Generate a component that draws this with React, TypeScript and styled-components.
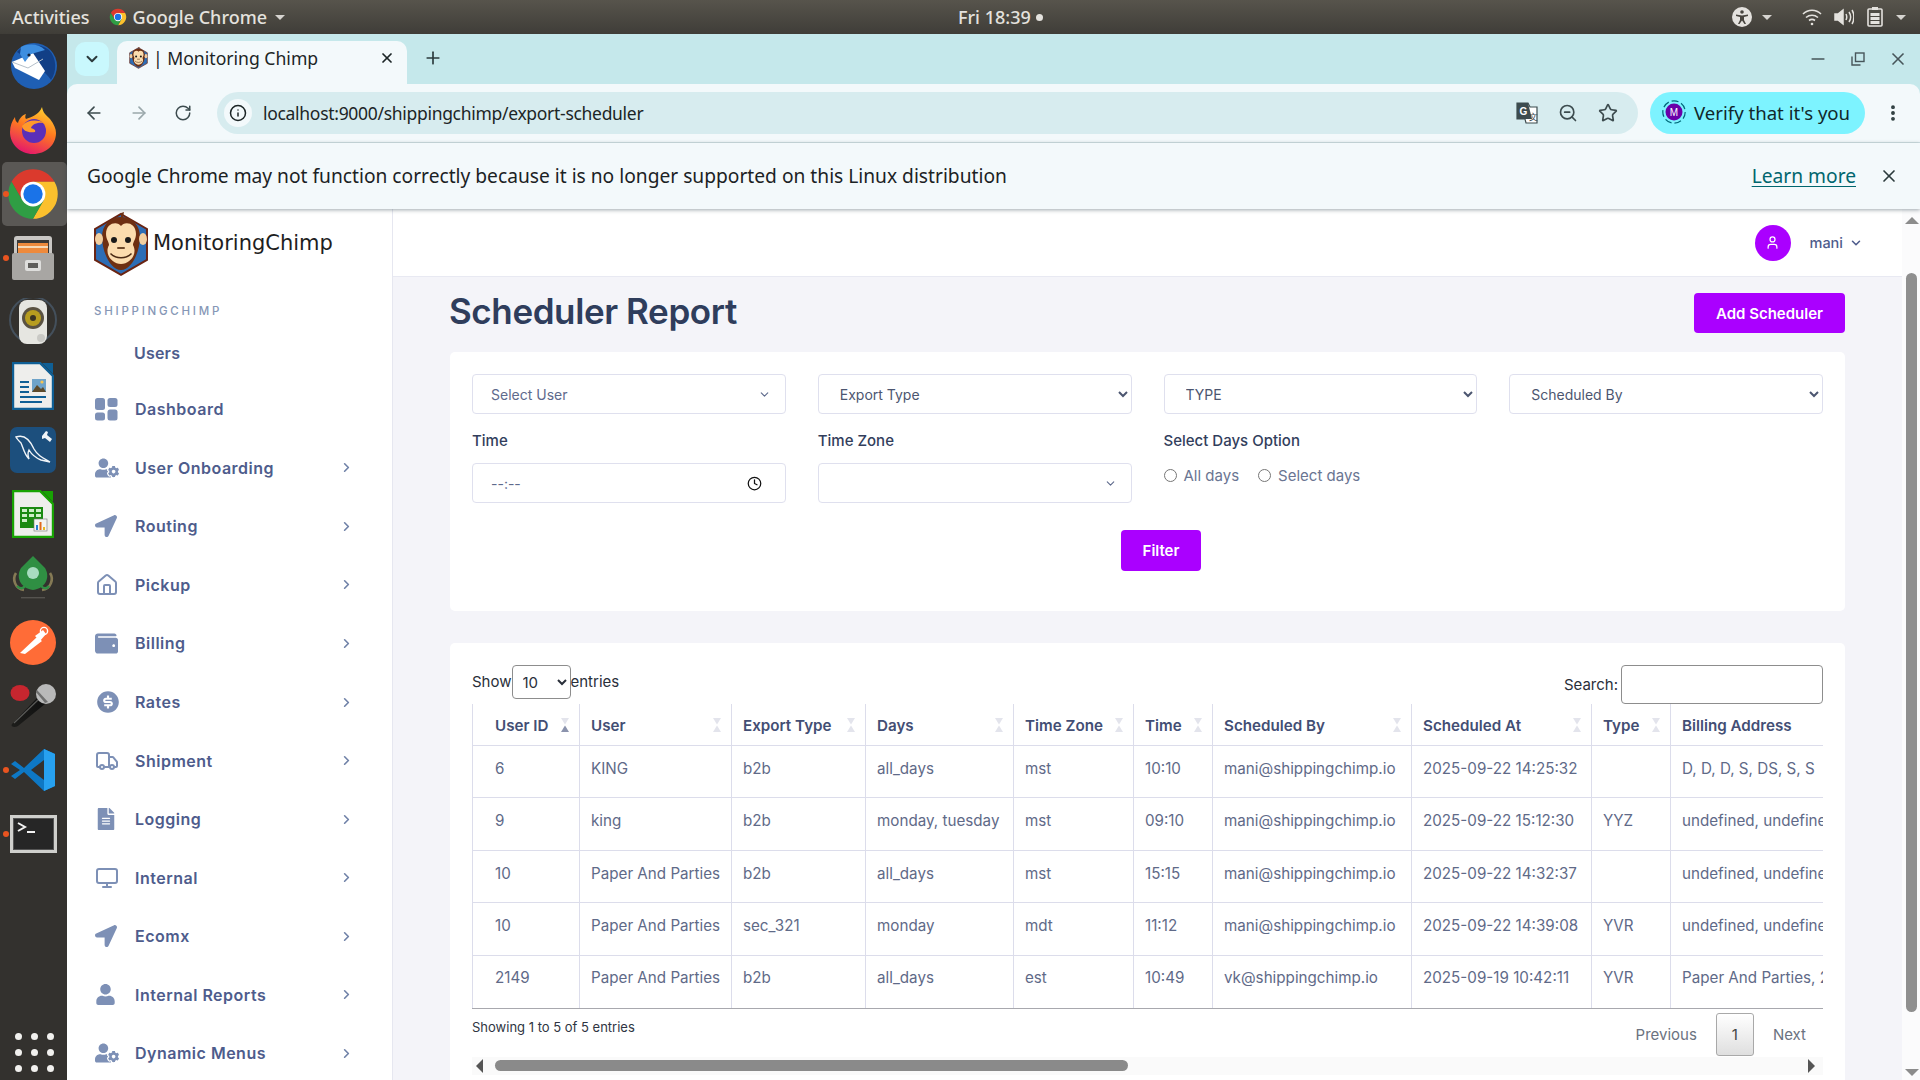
import React from 'react';
import styled, { createGlobalStyle } from 'styled-components';
import { ChevronDown, ChevronRight, Clock, Home, Monitor, Truck, User, X, Plus, ArrowLeft, ArrowRight, RotateCw, Info, ZoomOut, Star, EllipsisVertical, Minus } from 'lucide-react';
import { FaUserCog, FaLocationArrow, FaWallet, FaFileAlt, FaUser } from 'react-icons/fa';
import { RiMoneyDollarCircleFill } from 'react-icons/ri';

const ui = '"Inter", "Liberation Sans", sans-serif';
const chromeFont = '"Noto Sans", "Open Sans", sans-serif';
const purple = '#aa00ff';

const GlobalStyle = createGlobalStyle`
  html, body { margin: 0; padding: 0; height: 100%; overflow: hidden; }
  * { box-sizing: border-box; }
`;

const Screen = styled.div`
  width: 1920px;
  height: 1080px;
  overflow: hidden;
  display: flex;
  flex-direction: column;
  font-family: ${ui};
`;

// ---- ubuntu top bar
const TopBar = styled.div`
  height: 34px;
  flex: none;
  display: flex;
  align-items: center;
  background: linear-gradient(180deg, #57544c 0%, #3f3d38 100%);
  color: #e4e2de;
  font-family: ${chromeFont};
  font-size: 18px;
  font-weight: 500;
`;
const TopLeft = styled.div`
  width: 958px;
  flex: none;
  display: flex;
  align-items: center;
  padding-left: 12px;
`;
const AppName = styled.div`
  display: flex;
  align-items: center;
  gap: 6px;
  margin-left: 19px;
`;
const Caret = styled.span<{ $ml?: number }>`
  width: 0;
  height: 0;
  margin-left: ${p => p.$ml ?? 0}px;
  border-left: 5px solid transparent;
  border-right: 5px solid transparent;
  border-top: 5px solid #d6d4d0;
`;
const ClockText = styled.div`
  display: flex;
  align-items: center;
  gap: 5px;
`;
const ClockDot = styled.span`
  width: 7px;
  height: 7px;
  border-radius: 50%;
  background: #e4e2de;
`;
const TopRight = styled.div`
  margin-left: auto;
  padding-right: 14px;
  display: flex;
  align-items: center;
`;
const Spacer = styled.span<{ $w: number }>`
  width: ${p => p.$w}px;
`;

// ---- dock
const Body = styled.div`
  flex: 1;
  display: flex;
  min-height: 0;
`;
const Dock = styled.div`
  width: 67px;
  flex: none;
  background: #33312e;
  display: flex;
  flex-direction: column;
  align-items: flex-start;
`;
const DockItem = styled.div<{ $active?: boolean; $running?: boolean }>`
  width: 65px;
  height: 64px;
  margin-left: 2px;
  padding-right: 3px;
  flex: none;
  display: flex;
  align-items: center;
  justify-content: center;
  border-radius: 5px;
  position: relative;
  background: ${p => (p.$active ? '#5a5855' : 'transparent')};
  &::before {
    content: '';
    display: ${p => (p.$running ? 'block' : 'none')};
    position: absolute;
    left: 1px;
    top: 29px;
    width: 6px;
    height: 6px;
    border-radius: 50%;
    background: #e95420;
  }
`;
const DockGrid = styled.div`
  margin: auto 0 8px 15px;
  display: grid;
  grid-template-columns: repeat(3, 7px);
  gap: 9px;
  span {
    width: 7px;
    height: 7px;
    border-radius: 50%;
    background: #f1f0ee;
  }
`;

// ---- browser chrome
const Browser = styled.div`
  flex: 1;
  min-width: 0;
  display: flex;
  flex-direction: column;
  background: #c5e8eb;
`;
const TabStrip = styled.div`
  height: 50px;
  flex: none;
  display: flex;
  align-items: flex-end;
  padding-left: 8px;
  color: #2b3a3c;
`;
const TabListButton = styled.div`
  width: 34px;
  height: 34px;
  margin-bottom: 8px;
  border-radius: 10px;
  background: #c9f8fd;
  display: flex;
  align-items: center;
  justify-content: center;
`;
const Tab = styled.div`
  width: 290px;
  height: 43px;
  margin-left: 8px;
  padding: 0 12px 9px 12px;
  display: flex;
  align-items: center;
  background: #f3f9fb;
  border-radius: 10px 10px 0 0;
  font-family: ${chromeFont};
  font-size: 17.6px;
  color: #1c2526;
  span {
    margin-left: 5px;
    flex: 1;
    white-space: nowrap;
  }
`;
const NewTab = styled.div`
  margin: 0 0 12px 16px;
  height: 28px;
  display: flex;
  align-items: center;
`;
const WindowButtons = styled.div`
  margin-left: auto;
  padding: 0 12px 0 0;
  height: 50px;
  display: flex;
  align-items: center;
  gap: 23px;
  color: #47565a;
`;
const Toolbar = styled.div`
  height: 59px;
  flex: none;
  display: flex;
  align-items: center;
  padding: 0 16px 0 17px;
  background: #f3f9fb;
  border-radius: 10px 10px 0 0;
  border-bottom: 1px solid #d3e2e5;
  color: #47565a;
`;
const NavButton = styled.div<{ $dim?: boolean }>`
  width: 45px;
  flex: none;
  display: flex;
  justify-content: flex-start;
  padding-left: 0;
  color: ${p => (p.$dim ? '#9aa8ab' : '#3d4c4f')};
`;
const Omnibox = styled.div`
  width: 1421px;
  height: 42px;
  margin-left: -2px;
  flex: none;
  display: flex;
  align-items: center;
  padding-left: 7px;
  border-radius: 21px;
  background: #d7ecef;
  font-family: ${chromeFont};
  font-size: 17.5px;
  letter-spacing: -0.3px;
  color: #1c2526;
`;
const InfoChip = styled.div`
  width: 28px;
  height: 28px;
  border-radius: 50%;
  background: #f3f9fb;
  display: flex;
  align-items: center;
  justify-content: center;
  margin-right: 11px;
`;
const OmniActions = styled.div`
  margin-left: auto;
  display: flex;
  align-items: center;
  gap: 20px;
  padding-right: 20px;
  color: #3d4c4f;
`;
const VerifyPill = styled.div`
  width: 215px;
  height: 42px;
  margin-left: 12px;
  flex: none;
  display: flex;
  align-items: center;
  gap: 8px;
  padding: 0 0 2px 12px;
  border-radius: 21px;
  background: #7df3ff;
  font-family: ${chromeFont};
  font-size: 18.6px;
  color: #10282c;
  white-space: nowrap;
`;
const MenuDots = styled.div`
  margin-left: 18px;
  display: flex;
  color: #2b3a3c;
`;
const InfoBar = styled.div`
  height: 66px;
  flex: none;
  display: flex;
  align-items: center;
  padding: 0 21px 1px 20px;
  position: relative;
  z-index: 2;
  background: #f3f9fb;
  box-shadow: 0 1px 4px rgba(40, 60, 70, 0.45);
  font-family: ${chromeFont};
  font-size: 19.2px;
  color: #1b2224;
  white-space: nowrap;
`;
const LearnMore = styled.a`
  margin-left: auto;
  color: #00666e;
  text-decoration: underline;
  text-underline-offset: 3px;
`;
const InfoClose = styled.div`
  margin-left: 23px;
  display: flex;
  color: #2b3a3c;
`;

// ---- page
const Page = styled.div`
  flex: 1;
  min-height: 0;
  display: flex;
  background: #f4f4f9;
`;
const Sidebar = styled.aside`
  width: 326px;
  flex: none;
  background: #fff;
  border-right: 1px solid #e6e7f0;
  padding-top: 3px;
`;
const Brand = styled.div`
  display: flex;
  align-items: center;
  height: 65px;
  padding-left: 26px;
  font-family: "DejaVu Sans", sans-serif;
  font-size: 21px;
  color: #1e1e1e;
  span { margin: 0 0 3px 4px; }
`;
const SectionTitle = styled.div`
  margin: 27px 0 0 27px;
  font-size: 11.5px;
  font-weight: 500;
  letter-spacing: 2.75px;
  color: #8697b6;
`;
const SubItem = styled.div`
  margin: 23px 0 0 67px;
  height: 24px;
  line-height: 24px;
  font-size: 16px;
  font-weight: 600;
  letter-spacing: 0.2px;
  color: #4e5c8c;
`;
const NavList = styled.nav`
  margin-top: 15px;
  display: flex;
  flex-direction: column;
`;
const NavItem = styled.div`
  height: 58.55px;
  display: flex;
  align-items: center;
  padding: 0 38px 0 28px;
  font-size: 16px;
  font-weight: 600;
  letter-spacing: 0.5px;
  color: #4e5c8c;
`;
const NavIcon = styled.span`
  width: 40px;
  flex: none;
  display: flex;
  color: #7d90b6;
`;
const NavChevron = styled.span`
  margin-left: auto;
  display: flex;
  color: #6f81a7;
`;
const Main = styled.main`
  flex: 1;
  min-width: 0;
  display: flex;
  flex-direction: column;
`;
const TopHeader = styled.header`
  height: 68px;
  flex: none;
  display: flex;
  align-items: center;
  justify-content: flex-end;
  padding-right: 39px;
  background: #fff;
  border-bottom: 1px solid #e8e9f2;
  font-size: 14.5px;
  font-weight: 500;
  color: #4e5c8c;
`;
const Avatar = styled.div`
  width: 36px;
  height: 36px;
  margin: 0 19px 0 0;
  border-radius: 50%;
  background: ${purple};
  color: #fff;
  display: flex;
  align-items: center;
  justify-content: center;
`;
const UserName = styled.div`
  display: flex;
  align-items: center;
  gap: 6px;
`;
const Content = styled.div`
  flex: 1;
  min-height: 0;
  padding: 16px 57px 0 57px;
`;
const TitleRow = styled.div`
  height: 40px;
  display: flex;
  align-items: center;
  justify-content: space-between;
  margin-bottom: 19px;
`;
const Title = styled.h1`
  margin: -5px 0 0 -1px;
  font-size: 35px;
  font-weight: 600;
  letter-spacing: -0.4px;
  color: #2f3d5c;
`;
const PrimaryButton = styled.button`
  height: 40px;
  padding: 0 22px;
  border: 0;
  border-radius: 4px;
  background: ${purple};
  color: #fff;
  font-family: ${ui};
  font-size: 15px;
  font-weight: 600;
`;
const Card = styled.section`
  background: #fff;
  border-radius: 5px;
  padding: 22px 22px 0 22px;
`;
const FilterCard = styled(Card)`
  height: 259px;
  margin-bottom: 32px;
`;
const FilterGrid = styled.div`
  display: grid;
  grid-template-columns: repeat(4, 1fr);
  column-gap: 32px;
  row-gap: 16px;
`;
const fieldBase = `
  width: 100%;
  height: 40px;
  border: 1px solid #dfe0ee;
  border-radius: 4px;
  background: #fff;
  font-family: ${ui};
  font-size: 14px;
`;
const NativeSelect = styled.select`
  ${fieldBase}
  padding-left: 17px;
  color: #4c5670;
`;
const FakeField = styled.div<{ $pr?: number }>`
  ${fieldBase}
  display: flex;
  align-items: center;
  justify-content: space-between;
  padding: 0 ${p => p.$pr ?? 14}px 0 18px;
  color: #5e6a8c;
`;
const FieldBlock = styled.div`
  display: flex;
  flex-direction: column;
`;
const FieldLabel = styled.label`
  height: 33px;
  line-height: 22px;
  font-size: 15px;
  font-weight: 500;
  color: #323e5c;
`;
const RadioRow = styled.div`
  display: flex;
  align-items: center;
  height: 24px;
  font-size: 15px;
  color: #6a7592;
  label {
    display: flex;
    align-items: center;
    margin-right: 19px;
  }
  input {
    width: 13px;
    height: 13px;
    margin: 0 7px 0 0;
  }
`;
const FilterAction = styled.div`
  margin-top: 27px;
  display: flex;
  justify-content: center;
  button { margin-left: 27px; padding: 0 22px; height: 41px; }
`;
const TableCard = styled(Card)`
  height: 460px;
  color: #2a2f3a;
`;
const TableTop = styled.div`
  height: 39px;
  display: flex;
  justify-content: space-between;
  font-size: 15px;
`;
const LengthControl = styled.div`
  display: flex;
  align-items: flex-start;
  line-height: 34px;
  select {
    width: 59px;
    height: 34px;
    padding-left: 6px;
    border: 1px solid #8d8d8d;
    border-radius: 4px;
    background: #fff;
    font-family: ${ui};
    font-size: 15px;
    color: #2a2f3a;
  }
`;
const SearchControl = styled.div`
  display: flex;
  align-items: center;
  gap: 3px;
  input {
    width: 202px;
    height: 39px;
    border: 1px solid #8d8d8d;
    border-radius: 4px;
    background: #fff;
  }
`;
const TableClip = styled.div`
  overflow: hidden;
  border-bottom: 1px solid #a8a8ae;
`;
const Table = styled.table`
  table-layout: fixed;
  width: 1649px;
  border-collapse: collapse;
  border-style: hidden hidden hidden solid;
  border-left: 1px solid #dcddeb;
  th, td {
    border: 1px solid #dcddeb;
    padding: 0 10px 0 11px;
    text-align: left;
    white-space: nowrap;
    overflow: hidden;
    font-size: 15.2px;
  }
  th:first-child, td:first-child { padding-left: 22px; }
  th {
    height: 41px;
    padding-top: 2px;
    font-weight: 600;
    color: #434e74;
    border-top: 1px solid #dcddeb;
  }
  td {
    height: 52.6px;
    padding-top: 11px;
    padding-bottom: 16px;
    vertical-align: top;
    line-height: 24px;
    color: #5f6a88;
  }
  tr:last-child td { border-bottom: 0; padding-top: 10px; }
`;
const HeadInner = styled.div`
  display: flex;
  align-items: center;
  justify-content: space-between;
  svg { flex: none; }
`;
const TableFooter = styled.div`
  height: 48px;
  display: flex;
  justify-content: space-between;
  align-items: flex-start;
`;
const InfoText = styled.div`
  margin-top: 10px;
  font-size: 13px;
  color: #2f3542;
`;
const Pagination = styled.div`
  display: flex;
  align-items: center;
  margin-top: 4px;
  padding-right: 17px;
  font-size: 15px;
  color: #6b7280;
`;
const PageButton = styled.div`
  width: 38px;
  height: 43px;
  margin: 0 19px;
  display: flex;
  align-items: center;
  justify-content: center;
  border: 1px solid #a9a9a9;
  border-radius: 3px;
  background: linear-gradient(180deg, #fff 0%, #dfdfdf 100%);
  color: #444;
`;
const HScroll = styled.div`
  height: 18px;
  display: flex;
  align-items: center;
  background: #fafafa;
  padding: 0 8px 0 4px;
  span.thumb {
    width: 633px;
    height: 11px;
    margin-left: 12px;
    border-radius: 6px;
    background: #8a8a8a;
  }
`;
const ArrowH = styled.span<{ $right?: boolean }>`
  width: 0;
  height: 0;
  margin-left: ${p => (p.$right ? 'auto' : '0')};
  border-top: 7px solid transparent;
  border-bottom: 7px solid transparent;
  border-left: ${p => (p.$right ? '7px solid #555' : '0')};
  border-right: ${p => (p.$right ? '0' : '7px solid #555')};
`;
const VScroll = styled.div`
  width: 18px;
  flex: none;
  background: #fbfbfc;
  display: flex;
  flex-direction: column;
  align-items: center;
  padding: 8px 0 4px 1px;
`;
const ArrowV = styled.span<{ $down?: boolean }>`
  width: 0;
  height: 0;
  flex: none;
  border-left: 7px solid transparent;
  border-right: 7px solid transparent;
  border-bottom: ${p => (p.$down ? '0' : '7px solid #8c8c8c')};
  border-top: ${p => (p.$down ? '7px solid #8c8c8c' : '0')};
`;
const VThumb = styled.span`
  width: 11px;
  height: 739px;
  margin: 49px 0 auto;
  border-radius: 6px;
  background: #8f8f8f;
`;

// ---- drawings
const ChromeLogo = ({ size }: { size: number }) => (
  <svg width={size} height={size} viewBox="0 0 48 48">
    <path d="M43.05 13A22 22 0 0 0 4.95 13L14.47 29.5 24 13Z" fill="#db3a2d" />
    <path d="M43.05 13A22 22 0 0 1 24 46L33.5 29.5 24 13Z" fill="#fbc02d" />
    <path d="M4.95 13A22 22 0 0 0 24 46L33.5 29.5 14.47 29.5Z" fill="#2f9e44" />
    <circle cx="24" cy="24" r="11" fill="#fff" />
    <circle cx="24" cy="24" r="8.6" fill="#1a73e8" />
  </svg>
);

const Chimp = ({ size }: { size: number }) => (
  <svg width={size} height={size * 1.16} viewBox="0 0 56 65">
    <path d="M28 2 54 17V48L28 63 2 48V17Z" fill="#2d6db5" stroke="#6a2412" strokeWidth="2" />
    <path d="M28 1l3-1-1 5c10 1 17 9 17 20 0 14-8 33-19 33S9 39 9 25C9 13 17 5 28 5Z" fill="#6e2f12" />
    <ellipse cx="6" cy="27" rx="4" ry="6" fill="#f2cfa0" />
    <ellipse cx="50" cy="27" rx="4" ry="6" fill="#f2cfa0" />
    <path d="M28 14c3-5 15-4 15 8 0 5-3 8-3 11 5 9-3 19-12 19S11 42 16 33c0-3-3-6-3-11 0-12 12-13 15-8Z" fill="#fbdcae" />
    <circle cx="21" cy="28" r="3" fill="#1a1a1a" />
    <circle cx="35" cy="28" r="3" fill="#1a1a1a" />
    <path d="M25 36h6" stroke="#6e4a2c" strokeWidth="2" strokeLinecap="round" />
    <path d="M18 42c5 5 15 5 20 0" stroke="#4a2a14" strokeWidth="1.6" fill="none" strokeLinecap="round" />
  </svg>
);

const Thunderbird = () => (
  <svg width="48" height="48" viewBox="0 0 48 48">
    <circle cx="25" cy="24" r="23" fill="#1f5fb4" />
    <path d="M8 10c6-8 22-10 32-2 8 8 8 22 2 30-5-8-16-16-34-28Z" fill="#123f86" />
    <path d="M3 20 24 11l12 18-6 9L6 26Z" fill="#fff" />
    <path d="M3 20l16 6 15-9" stroke="#b5bfc9" strokeWidth="1" fill="none" />
    <path d="M12 5c8-4 18-3 24 3l-14 4-6 8-5-8Z" fill="#3d8ee0" />
    <circle cx="20" cy="13" r="1.6" fill="#10233f" />
  </svg>
);

const Firefox = () => (
  <svg width="48" height="48" viewBox="0 0 48 48">
    <defs>
      <linearGradient id="ff" x1="0.7" y1="0" x2="0.3" y2="1">
        <stop offset="0" stopColor="#ffcf30" />
        <stop offset="0.45" stopColor="#ff7a1f" />
        <stop offset="1" stopColor="#e3136f" />
      </linearGradient>
    </defs>
    <path d="M33 1c1 6 4 8 8 12 4 5 6 10 6 14 0 12-10 21-23 21S1 38 1 26c0-6 2-11 5-15 0 3 1 5 3 6 1-4 4-8 8-9-1 2-1 4 0 5 5-2 13-4 16-12Z" fill="url(#ff)" />
    <circle cx="25" cy="25" r="12" fill="#5b2fb8" />
    <path d="M13 20c5-6 15-7 22-3-8-1-12 2-13 5 3 1 5 2 4 4-7 1-12-1-13-6Z" fill="#ff9a2b" />
  </svg>
);

const FilesIcon = () => (
  <svg width="44" height="46" viewBox="0 0 44 46">
    <rect x="3" y="1" width="38" height="44" rx="3" fill="#c9c7c4" />
    <rect x="6" y="5" width="32" height="14" fill="#3b3936" />
    <rect x="7" y="8" width="30" height="10" fill="#ee8a3c" />
    <rect x="7" y="11" width="30" height="2" fill="#f8d9b5" />
    <rect x="1" y="18" width="42" height="27" rx="2" fill="#a8a6a3" />
    <rect x="14" y="25" width="16" height="11" rx="2" fill="#dededc" />
    <rect x="17" y="28" width="10" height="5" fill="#5f5e5b" />
  </svg>
);

const Rhythmbox = () => (
  <svg width="48" height="48" viewBox="0 0 48 48">
    <circle cx="24" cy="22" r="23" fill="none" stroke="#44505c" strokeWidth="2" />
    <rect x="10" y="2" width="28" height="44" rx="8" fill="#e6e6e1" />
    <circle cx="24" cy="20" r="11" fill="#5a5242" />
    <circle cx="24" cy="20" r="8" fill="#b79d1f" />
    <circle cx="24" cy="20" r="3" fill="#3b3523" />
    <circle cx="32" cy="40" r="4" fill="#c9c9c5" />
  </svg>
);

const DocIcon = ({ accent, children }: { accent: string; children: React.ReactNode }) => (
  <svg width="42" height="48" viewBox="0 0 42 48">
    <path d="M1 1H28L41 14V47H1Z" fill="#eeeeec" stroke={accent} strokeWidth="2.4" />
    <path d="M30 1H41V12Z" fill={accent} />
    {children}
  </svg>
);

const WriterIcon = () => (
  <DocIcon accent="#0f5f95">
    <rect x="8" y="19" width="9" height="2" fill="#0f5f95" />
    <rect x="8" y="24" width="9" height="2" fill="#0f5f95" />
    <rect x="8" y="29" width="9" height="2" fill="#0f5f95" />
    <rect x="8" y="34" width="26" height="2" fill="#0f5f95" />
    <rect x="8" y="39" width="22" height="2" fill="#0f5f95" />
    <rect x="20" y="17" width="14" height="13" fill="#6ea3c9" />
    <path d="M20 30l5-7 4 4 2-2 3 5Z" fill="#5d4a2a" />
    <circle cx="30" cy="20" r="1.6" fill="#f5c451" />
  </DocIcon>
);

const CalcIcon = () => (
  <DocIcon accent="#18a303">
    <rect x="8" y="17" width="23" height="21" fill="#1b8a12" />
    <g fill="#cdeec7">
      <rect x="10" y="19" width="5" height="3" />
      <rect x="17" y="19" width="5" height="3" />
      <rect x="24" y="19" width="5" height="3" />
      <rect x="10" y="24" width="5" height="3" />
      <rect x="17" y="24" width="5" height="3" />
      <rect x="24" y="24" width="5" height="3" />
      <rect x="10" y="29" width="5" height="3" />
    </g>
    <rect x="22" y="29" width="13" height="12" fill="#f4f4f2" stroke="#777" strokeWidth="0.6" />
    <rect x="24" y="35" width="2" height="5" fill="#2a7fd1" />
    <rect x="27.5" y="32" width="2" height="8" fill="#e06a1c" />
    <rect x="31" y="37" width="2" height="3" fill="#e8b822" />
  </DocIcon>
);

const WorkbenchIcon = () => (
  <svg width="46" height="46" viewBox="0 0 46 46">
    <rect width="46" height="46" rx="7" fill="#1c4f7d" />
    <path d="M6 10c8-3 14 3 18 12 4 7 9 9 16 13l-9-2c-5-2-9-5-12-10-2 4 0 9 0 9-5-5-6-12-8-16-2-2-4-4-5-6Z" fill="none" stroke="#f0f4f8" strokeWidth="1.4" />
    <path d="M32 9l4-5 2 1-1 3 5 4-2 3-5-4-3 1Z" fill="#f0f4f8" />
  </svg>
);

const RoboIcon = () => (
  <svg width="44" height="46" viewBox="0 0 44 46">
    <path d="M5 18c-4 6-1 16 8 17M39 18c4 6 1 16-8 17" stroke="#857a55" strokeWidth="2.6" fill="none" />
    <path d="M22 1 34 13c5 8 2 20-12 22C8 33 5 21 10 13Z" fill="#2f8f43" />
    <circle cx="22" cy="18" r="6" fill="#a8dcc0" />
    <path d="M6 31c3 3 6 3 8 0M30 31c3 3 6 3 8 0" stroke="#2f8f43" strokeWidth="2.4" fill="none" />
    <rect x="10" y="42" width="24" height="1.4" fill="#55534f" />
  </svg>
);

const PostmanIcon = () => (
  <svg width="46" height="45" viewBox="0 0 46 45">
    <ellipse cx="23" cy="22.5" rx="23" ry="22.5" fill="#ff6c37" />
    <path d="M10 33 27 17l5 4-17 13Z" fill="#fff" />
    <path d="M25 16l8-6 3 4-6 7Z" fill="#fff" />
    <circle cx="34" cy="11" r="3.6" fill="none" stroke="#fff" strokeWidth="1.4" />
  </svg>
);

const MicIcon = () => (
  <svg width="48" height="44" viewBox="0 0 48 44">
    <defs>
      <linearGradient id="mic" x1="0" y1="1" x2="1" y2="0">
        <stop offset="0" stopColor="#1d1d1b" />
        <stop offset="1" stopColor="#0f0f0f" />
      </linearGradient>
    </defs>
    <ellipse cx="11" cy="9" rx="9.500" ry="8" fill="#c7262f" />
    <path d="M3 40 29 13l7 7-27 22c-3 2-8 1-6-2Z" fill="url(#mic)" />
    <path d="M5 39 30 15" stroke="#5a5a58" strokeWidth="1.200" />
    <circle cx="37" cy="10" r="10" fill="#b9b9b9" />
    <path d="M27 8l9 11 3-1-11-12Z" fill="#6f6f6f" />
  </svg>
);

const VsCodeIcon = () => (
  <svg width="44" height="42" viewBox="0 0 44 42">
    <path d="M33 0 44 5V37L33 42 13 23 4 30 0 27 9 21 0 15 4 12 13 19Z" fill="#0e78c4" />
    <path d="M33 0 44 5V37L33 42Z" fill="#27a1f0" />
    <path d="M33 11 20 21 33 31Z" fill="#33312e" />
  </svg>
);

const TerminalIcon = () => (
  <svg width="47" height="38" viewBox="0 0 47 38">
    <rect width="47" height="38" fill="#cfcfcc" />
    <rect x="3.500" y="3.500" width="40" height="31" fill="#262626" stroke="#555" />
    <path d="M8 8l7 4-7 4" stroke="#f2f2f2" strokeWidth="2" fill="none" />
    <rect x="17" y="16" width="8" height="2" fill="#f2f2f2" />
  </svg>
);

const DashboardIcon = () => (
  <svg width="23" height="23" viewBox="0 0 23 23" fill="currentColor">
    <rect x="0" y="0" width="10" height="12" rx="2.5" />
    <rect x="12.5" y="0" width="10" height="9" rx="2.5" />
    <rect x="0" y="14.5" width="10" height="8" rx="2.5" />
    <rect x="12.5" y="11.5" width="10" height="11" rx="2.5" />
  </svg>
);

const SortMark = ({ active }: { active?: boolean }) => (
  <svg width="8" height="14" viewBox="0 0 8 14">
    <path d="M0 0H8L4 6.500Z" fill="#e3e4ec" />
    <path d="M4 7.500 8 14H0Z" fill={active ? '#8b93ad' : '#e3e4ec'} />
  </svg>
);

const TranslateIcon = () => (
  <svg width="22" height="22" viewBox="0 0 22 22">
    <path d="M1 1h11l2 4h7v16H10l-1-4H1Z" fill="#fff" stroke="#3d4c4f" strokeWidth="1.2" />
    <path d="M1 1h11l4 16H1Z" fill="#3d4c4f" />
    <text x="3.5" y="13" fontSize="10" fontWeight="700" fill="#fff" fontFamily="Liberation Sans">G</text>
    <text x="13" y="18" fontSize="9" fill="#3d4c4f" fontFamily="Liberation Sans">文</text>
  </svg>
);

const A11yIcon = () => (
  <svg width="20" height="20" viewBox="0 0 20 20">
    <circle cx="10" cy="10" r="10" fill="#e4e2de" />
    <circle cx="10" cy="5" r="1.8" fill="#47443e" />
    <path d="M4 7.5 10 8.5 16 7.5V9L12 10V13L14 17H12.5L10 13.5 7.5 17H6L8 13V10L4 9Z" fill="#47443e" />
  </svg>
);
const WifiIcon = () => (
  <svg width="20" height="18" viewBox="0 0 20 18" fill="none" stroke="#e4e2de" strokeWidth="1.6">
    <path d="M1 6c5-5 13-5 18 0M4 9.5c3.5-3 8.5-3 12 0M7 12.5c2-1.5 4-1.5 6 0" />
    <circle cx="10" cy="16" r="1.3" fill="#e4e2de" stroke="none" />
  </svg>
);
const VolumeIcon = () => (
  <svg width="20" height="18" viewBox="0 0 20 18" fill="none" stroke="#e4e2de" strokeWidth="1.5">
    <path d="M1 6h3l5-4v14l-5-4H1Z" fill="#e4e2de" />
    <path d="M12 6c1 2 1 4 0 6M15 4c2 3 2 7 0 10M18 2c2.500 4 2.500 10 0 14" />
  </svg>
);
const BatteryIcon = () => (
  <svg width="16" height="20" viewBox="0 0 16 20">
    <rect x="5" y="0" width="6" height="3" fill="#e4e2de" />
    <rect x="1" y="2" width="14" height="17" rx="1" fill="none" stroke="#e4e2de" strokeWidth="1.6" />
    <rect x="3.500" y="6" width="9" height="3" fill="#e4e2de" />
    <rect x="3.500" y="10" width="9" height="3" fill="#e4e2de" />
    <rect x="3.500" y="14" width="9" height="3" fill="#e4e2de" />
  </svg>
);
const RestoreIcon = () => (
  <svg width="14" height="14" viewBox="0 0 14 14" fill="none" stroke="currentColor" strokeWidth="1.4">
    <rect x="4.500" y="1" width="8.500" height="8.500" />
    <path d="M1 4.500V13H9.500" />
  </svg>
);
const AccountBadge = () => (
  <svg width="24" height="24" viewBox="0 0 24 24">
    <circle cx="12" cy="12" r="11.200" fill="none" stroke="#00697a" strokeWidth="1.200" strokeDasharray="7 3" />
    <circle cx="12" cy="12" r="8.500" fill="#6a00a8" />
    <text x="12" y="15.500" textAnchor="middle" fontSize="10" fill="#fff" fontFamily="Liberation Sans">M</text>
  </svg>
);

const dockApps: { icon: React.ReactNode; active?: boolean; running?: boolean }[] = [
  { icon: <Thunderbird /> },
  { icon: <Firefox /> },
  { icon: <ChromeLogo size={54} />, active: true, running: true },
  { icon: <FilesIcon />, running: true },
  { icon: <Rhythmbox /> },
  { icon: <WriterIcon /> },
  { icon: <WorkbenchIcon /> },
  { icon: <CalcIcon /> },
  { icon: <RoboIcon /> },
  { icon: <PostmanIcon /> },
  { icon: <MicIcon /> },
  { icon: <VsCodeIcon />, running: true },
  { icon: <TerminalIcon />, running: true },
];

const navItems: { label: string; icon: React.ReactNode; sub?: boolean }[] = [
  { label: 'Dashboard', icon: <DashboardIcon /> },
  { label: 'User Onboarding', icon: <FaUserCog size={24} />, sub: true },
  { label: 'Routing', icon: <FaLocationArrow size={22} />, sub: true },
  { label: 'Pickup', icon: <Home size={24} />, sub: true },
  { label: 'Billing', icon: <FaWallet size={23} />, sub: true },
  { label: 'Rates', icon: <RiMoneyDollarCircleFill size={26} />, sub: true },
  { label: 'Shipment', icon: <Truck size={24} />, sub: true },
  { label: 'Logging', icon: <FaFileAlt size={22} />, sub: true },
  { label: 'Internal', icon: <Monitor size={24} />, sub: true },
  { label: 'Ecomx', icon: <FaLocationArrow size={22} />, sub: true },
  { label: 'Internal Reports', icon: <FaUser size={21} />, sub: true },
  { label: 'Dynamic Menus', icon: <FaUserCog size={24} />, sub: true },
];

const colWidths = [107, 152, 134, 148, 120, 79, 199, 180, 79, 451];
const headers = ['User ID', 'User', 'Export Type', 'Days', 'Time Zone', 'Time', 'Scheduled By', 'Scheduled At', 'Type', 'Billing Address'];
const rows = [
  ['6', 'KING', 'b2b', 'all_days', 'mst', '10:10', 'mani@shippingchimp.io', '2025-09-22 14:25:32', '', 'D, D, D, S, DS, S, S'],
  ['9', 'king', 'b2b', 'monday, tuesday', 'mst', '09:10', 'mani@shippingchimp.io', '2025-09-22 15:12:30', 'YYZ', 'undefined, undefined, undefined'],
  ['10', 'Paper And Parties', 'b2b', 'all_days', 'mst', '15:15', 'mani@shippingchimp.io', '2025-09-22 14:32:37', '', 'undefined, undefined, undefined'],
  ['10', 'Paper And Parties', 'sec_321', 'monday', 'mdt', '11:12', 'mani@shippingchimp.io', '2025-09-22 14:39:08', 'YVR', 'undefined, undefined, undefined'],
  ['2149', 'Paper And Parties', 'b2b', 'all_days', 'est', '10:49', 'vk@shippingchimp.io', '2025-09-19 10:42:11', 'YVR', 'Paper And Parties, 2149'],
];

export default function App() {
  return (
    <Screen>
      <GlobalStyle />
      <TopBar>
        <TopLeft>
          Activities
          <AppName>
            <ChromeLogo size={18} />
            Google Chrome
            <Caret $ml={2} />
          </AppName>
        </TopLeft>
        <ClockText>
          Fri 18:39
          <ClockDot />
        </ClockText>
        <TopRight>
          <A11yIcon />
          <Caret $ml={10} />
          <Spacer $w={30} />
          <WifiIcon />
          <Spacer $w={12} />
          <VolumeIcon />
          <Spacer $w={13} />
          <BatteryIcon />
          <Caret $ml={13} />
        </TopRight>
      </TopBar>
      <Body>
        <Dock>
          {dockApps.map((app, i) => (
            <DockItem key={i} $active={app.active} $running={app.running}>
              {app.icon}
            </DockItem>
          ))}
          <DockGrid>
            {Array.from({ length: 9 }).map((_, i) => (
              <span key={i} />
            ))}
          </DockGrid>
        </Dock>
        <Browser>
          <TabStrip>
            <TabListButton>
              <ChevronDown size={18} strokeWidth={2.6} />
            </TabListButton>
            <Tab>
              <Chimp size={19} />
              <span>| Monitoring Chimp</span>
              <X size={16} strokeWidth={2.6} />
            </Tab>
            <NewTab>
              <Plus size={20} strokeWidth={2} />
            </NewTab>
            <WindowButtons>
              <Minus size={20} />
              <RestoreIcon />
              <X size={20} />
            </WindowButtons>
          </TabStrip>
          <Toolbar>
            <NavButton><ArrowLeft size={20} /></NavButton>
            <NavButton $dim><ArrowRight size={20} /></NavButton>
            <NavButton><RotateCw size={18} /></NavButton>
            <Omnibox>
              <InfoChip><Info size={18} /></InfoChip>
              localhost:9000/shippingchimp/export-scheduler
              <OmniActions>
                <TranslateIcon />
                <ZoomOut size={20} />
                <Star size={20} strokeWidth={2} />
              </OmniActions>
            </Omnibox>
            <VerifyPill>
              <AccountBadge />
              Verify that it's you
            </VerifyPill>
            <MenuDots><EllipsisVertical size={20} strokeWidth={2.6} /></MenuDots>
          </Toolbar>
          <InfoBar>
            Google Chrome may not function correctly because it is no longer supported on this Linux distribution
            <LearnMore>Learn more</LearnMore>
            <InfoClose><X size={20} /></InfoClose>
          </InfoBar>
          <Page>
            <Sidebar>
              <Brand>
                <Chimp size={56} />
                <span>MonitoringChimp</span>
              </Brand>
              <SectionTitle>SHIPPINGCHIMP</SectionTitle>
              <SubItem>Users</SubItem>
              <NavList>
                {navItems.map(item => (
                  <NavItem key={item.label}>
                    <NavIcon>{item.icon}</NavIcon>
                    {item.label}
                    {item.sub && (
                      <NavChevron><ChevronRight size={15} strokeWidth={2.6} /></NavChevron>
                    )}
                  </NavItem>
                ))}
              </NavList>
            </Sidebar>
            <Main>
              <TopHeader>
                <Avatar><User size={15} /></Avatar>
                <UserName>
                  mani
                  <ChevronDown size={14} strokeWidth={2.6} />
                </UserName>
              </TopHeader>
              <Content>
                <TitleRow>
                  <Title>Scheduler Report</Title>
                  <PrimaryButton>Add Scheduler</PrimaryButton>
                </TitleRow>
                <FilterCard>
                  <FilterGrid>
                    <FakeField>
                      Select User
                      <ChevronDown size={13} />
                    </FakeField>
                    <NativeSelect defaultValue="Export Type"><option>Export Type</option></NativeSelect>
                    <NativeSelect defaultValue="TYPE"><option>TYPE</option></NativeSelect>
                    <NativeSelect defaultValue="Scheduled By"><option>Scheduled By</option></NativeSelect>
                    <FieldBlock>
                      <FieldLabel>Time</FieldLabel>
                      <FakeField $pr={23}>
                        --:--
                        <Clock size={15} color="#111" strokeWidth={2} />
                      </FakeField>
                    </FieldBlock>
                    <FieldBlock>
                      <FieldLabel>Time Zone</FieldLabel>
                      <FakeField>
                        <span />
                        <ChevronDown size={13} />
                      </FakeField>
                    </FieldBlock>
                    <FieldBlock>
                      <FieldLabel>Select Days Option</FieldLabel>
                      <RadioRow>
                        <label><input type="radio" name="days" />All days</label>
                        <label><input type="radio" name="days" />Select days</label>
                      </RadioRow>
                    </FieldBlock>
                  </FilterGrid>
                  <FilterAction>
                    <PrimaryButton>Filter</PrimaryButton>
                  </FilterAction>
                </FilterCard>
                <TableCard>
                  <TableTop>
                    <LengthControl>
                      Show
                      <select defaultValue="10"><option>10</option></select>
                      entries
                    </LengthControl>
                    <SearchControl>
                      Search:
                      <input type="text" />
                    </SearchControl>
                  </TableTop>
                  <TableClip>
                    <Table>
                      <colgroup>
                        {colWidths.map((w, i) => (
                          <col key={i} style={{ width: w }} />
                        ))}
                      </colgroup>
                      <thead>
                        <tr>
                          {headers.map((h, i) => (
                            <th key={h}>
                              <HeadInner>
                                {h}
                                {i < 9 && <SortMark active={i === 0} />}
                              </HeadInner>
                            </th>
                          ))}
                        </tr>
                      </thead>
                      <tbody>
                        {rows.map((row, r) => (
                          <tr key={r}>
                            {row.map((cell, c) => (
                              <td key={c}>{cell}</td>
                            ))}
                          </tr>
                        ))}
                      </tbody>
                    </Table>
                  </TableClip>
                  <TableFooter>
                    <InfoText>Showing 1 to 5 of 5 entries</InfoText>
                    <Pagination>
                      Previous
                      <PageButton>1</PageButton>
                      Next
                    </Pagination>
                  </TableFooter>
                  <HScroll>
                    <ArrowH />
                    <span className="thumb" />
                    <ArrowH $right />
                  </HScroll>
                </TableCard>
              </Content>
            </Main>
            <VScroll>
              <ArrowV />
              <VThumb />
              <ArrowV $down />
            </VScroll>
          </Page>
        </Browser>
      </Body>
    </Screen>
  );
}
